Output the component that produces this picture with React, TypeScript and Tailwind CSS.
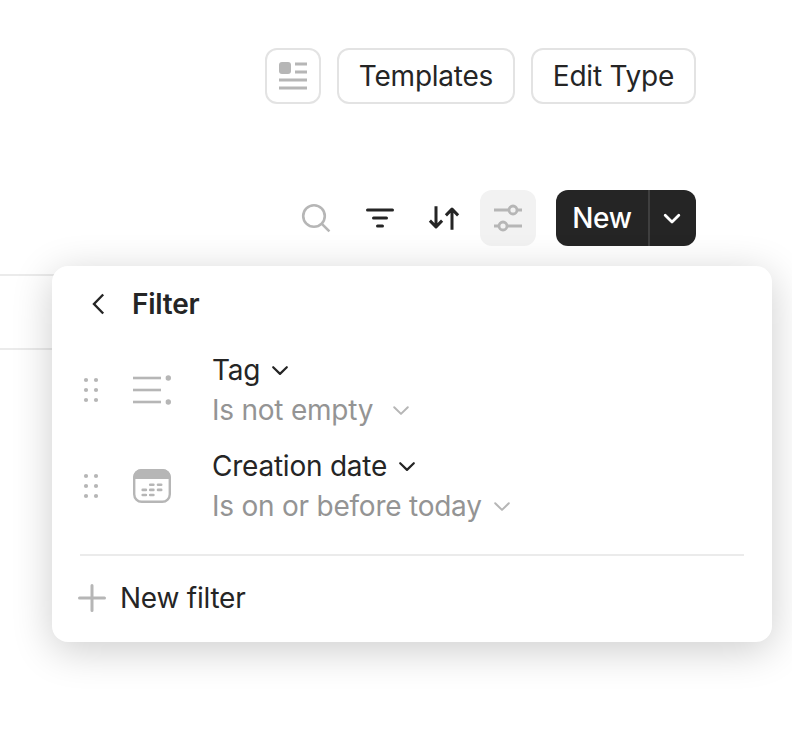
import React from "react";

function Chevron({ className = "", width = 2.2 }: { className?: string; width?: number }) {
  return (
    <svg className={`h-5 w-5 shrink-0 ${className}`} viewBox="0 0 20 20" fill="none" stroke="currentColor" strokeWidth={width} strokeLinecap="round" strokeLinejoin="round">
      <path d="M3.200 7.200 10 13.900l6.800-6.700" />
    </svg>
  );
}

function LayoutIcon() {
  return (
    <svg className="h-7 w-7" viewBox="0 0 28 28" fill="#b6b6b6">
      <rect x="0" y="0" width="12" height="12" rx="3" />
      <rect x="16" y="0.5" width="12" height="3" />
      <rect x="16" y="8.5" width="12" height="3" />
      <rect x="0" y="16.5" width="28" height="3" />
      <rect x="0" y="24.5" width="28" height="3" />
    </svg>
  );
}

function SearchIcon() {
  return (
    <svg className="h-10 w-10" viewBox="0 0 40 40" fill="none" stroke="#b6b6b6" strokeWidth="2.6">
      <circle cx="18" cy="18" r="10.8" />
      <path d="m25.6 25.6 7.8 7.8" />
    </svg>
  );
}

function FilterIcon() {
  return (
    <svg className="h-10 w-10" viewBox="0 0 40 40" fill="none" stroke="#252525" strokeWidth="3" strokeLinecap="round">
      <path d="M7.5 12h25M13.5 20h13M17.5 28h5" />
    </svg>
  );
}

function SortIcon() {
  return (
    <svg className="h-10 w-10" viewBox="0 0 40 40" fill="none" stroke="#252525" strokeWidth="3" strokeLinejoin="round">
      <path d="M12 8.300V29M5.900 22.600l6.100 6.300 6.100-6.300M28 31.700V11M21.900 17.400 28 11.100l6.100 6.300" />
    </svg>
  );
}

function SettingsIcon() {
  return (
    <svg className="h-10 w-10" viewBox="0 0 40 40" fill="none" stroke="#b6b6b6" strokeWidth="2.8">
      <path d="M6 12h15M29 12h5M6 28h5M19 28h15" />
      <circle cx="25" cy="12" r="4" />
      <circle cx="15" cy="28" r="4" />
    </svg>
  );
}

function DragHandle() {
  return (
    <svg className="h-7 w-[18px]" viewBox="0 0 18 28" fill="#b6b6b6">
      {[4, 14, 24].map((y) => (
        <React.Fragment key={y}>
          <circle cx="4" cy={y} r="2.1" />
          <circle cx="14" cy={y} r="2.1" />
        </React.Fragment>
      ))}
    </svg>
  );
}

function TagIcon() {
  return (
    <svg className="h-10 w-10" viewBox="0 0 40 40" fill="#b6b6b6">
      <rect x="1" y="6.700" width="28" height="2.6" />
      <rect x="1" y="18.700" width="28" height="2.6" />
      <rect x="1" y="30.700" width="28" height="2.6" />
      <circle cx="36.300" cy="8" r="2.700" />
      <circle cx="36.300" cy="32" r="2.700" />
    </svg>
  );
}

function CalendarIcon() {
  return (
    <svg className="h-10 w-10" viewBox="0 0 40 40">
      <rect x="2.200" y="4.200" width="35.600" height="31.600" rx="7.500" fill="none" stroke="#b6b6b6" strokeWidth="2.400" />
      <path d="M1 13V11.500a8.500 8.500 0 0 1 8.500-8.500h21a8.500 8.500 0 0 1 8.500 8.500v1.500Z" fill="#b6b6b6" />
      <path d="M18.200 18.700h3.200M26 18.700h3.200M10.700 23.900h3.200M18.200 23.900h3.200M26 23.900h3.200M10.700 29h3.200M18.200 29h3.200" stroke="#b6b6b6" strokeWidth="2.600" strokeLinecap="round" />
    </svg>
  );
}

type RuleProps = {
  icon: React.ReactNode;
  name: string;
  condition: string;
  gap: string;
};

function FilterRule({ icon, name, condition, gap }: RuleProps) {
  return (
    <div className="flex h-24 items-center">
      <DragHandle />
      <div className="ml-8 flex w-20">{icon}</div>
      <div className="flex flex-col">
        <button className="flex h-10 items-center gap-2.5 whitespace-nowrap text-[#252525]">
          {name}
          <Chevron />
        </button>
        <button className={`flex h-10 items-center whitespace-nowrap text-[#949494] ${gap}`}>
          {condition}
          <Chevron className="text-[#b6b6b6]" width={2} />
        </button>
      </div>
    </div>
  );
}

export default function App() {
  return (
    <div className="relative h-[756px] w-[792px] overflow-hidden bg-white font-['Inter',sans-serif] text-[28px] leading-10 tracking-[-0.23px] text-[#252525]">
      <div className="flex justify-end gap-4 pt-12 pr-24">
        <button className="flex h-14 w-14 items-center justify-center rounded-xl border-2 border-[#e3e3e3]">
          <LayoutIcon />
        </button>
        <button className="flex h-14 w-[178px] items-center justify-center rounded-xl border-2 border-[#e3e3e3]">Templates</button>
        <button className="flex h-14 w-[165px] items-center justify-center rounded-xl border-2 border-[#e3e3e3] whitespace-nowrap">Edit Type</button>
      </div>

      <div className="mt-[86px] flex h-14 items-center justify-end pr-24">
        <div className="flex items-center gap-6">
          <SearchIcon />
          <FilterIcon />
          <SortIcon />
        </div>
        <button className="ml-4 flex h-14 w-14 items-center justify-center rounded-xl bg-[#f2f2f2]">
          <SettingsIcon />
        </button>
        <div className="ml-5 flex h-14 w-[140px] overflow-hidden rounded-xl bg-[#252525] text-white">
          <button className="flex w-[92px] items-center justify-center font-medium">New</button>
          <button className="flex flex-1 items-center border-l-2 border-[#3f3f3f] pl-3">
            <Chevron width={2.8} />
          </button>
        </div>
      </div>

      <div className="mt-7 mr-24 h-[76px] border-y-2 border-[#ebebeb]" />

      <div className="absolute top-[266px] left-[52px] h-[376px] w-[720px] rounded-2xl bg-white px-7 shadow-[0_8px_40px_rgba(0,0,0,0.2)]">
        <div className="flex h-[76px] items-center font-semibold">
          <svg className="ml-2 h-6 w-6" viewBox="0 0 24 24" fill="none" stroke="#252525" strokeWidth="2.400">
            <path d="M15.200 2.500 6 12l9.200 9.500" />
          </svg>
          <span className="ml-5">Filter</span>
        </div>
        <div className="flex flex-col pl-[2px]">
          <FilterRule icon={<TagIcon />} name="Tag" condition="Is not empty" gap="gap-[18px]" />
          <FilterRule icon={<CalendarIcon />} name="Creation date" condition="Is on or before today" gap="gap-2.5" />
        </div>
        <div className="mt-5 h-0.5 bg-[#ebebeb]" />
        <button className="mt-[22px] flex h-10 items-center whitespace-nowrap">
          <svg className="-ml-0.5 h-7 w-7" viewBox="0 0 28 28" fill="none" stroke="#b6b6b6" strokeWidth="3" strokeLinecap="round">
            <path d="M14 1.500v25M1.500 14h25" />
          </svg>
          <span className="ml-3.5">New filter</span>
        </button>
      </div>
    </div>
  );
}
